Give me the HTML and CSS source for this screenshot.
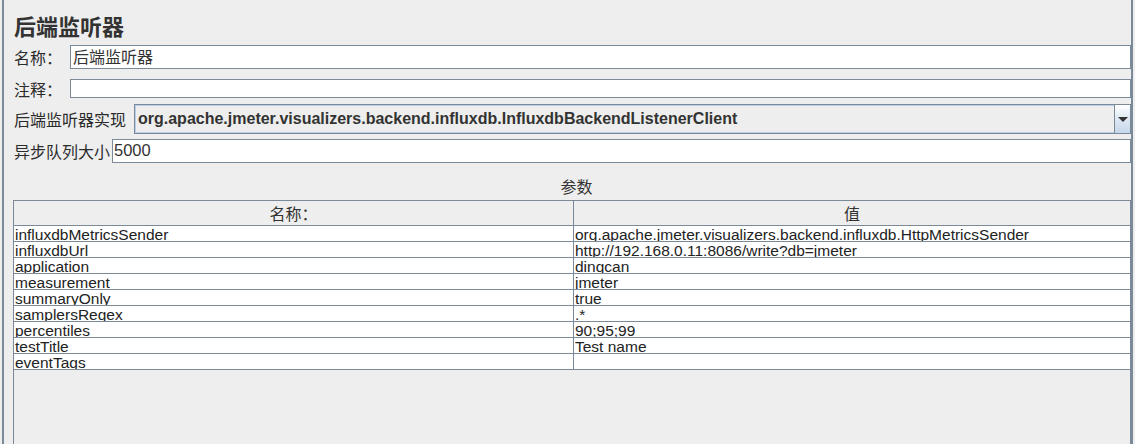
FILE: index.html
```html
<!DOCTYPE html>
<html lang="zh">
<head>
<meta charset="utf-8">
<title>后端监听器</title>
<link rel="stylesheet" href="styles.css">
</head>
<body>
<div class="frame">
  <h1 class="title">后端监听器</h1>
  <div class="row row-name">
    <span class="lbl lbl-name">名称：</span>
    <div class="field">后端监听器</div>
  </div>
  <div class="row row-comment">
    <span class="lbl lbl-name">注释：</span>
    <div class="field"></div>
  </div>
  <div class="row row-impl">
    <span class="lbl">后端监听器实现</span>
    <div class="combo">
      <div class="combo-value">org.apache.jmeter.visualizers.backend.influxdb.InfluxdbBackendListenerClient</div>
      <div class="combo-btn"><span class="arrow"></span></div>
    </div>
  </div>
  <div class="row row-queue">
    <span class="lbl">异步队列大小</span>
    <div class="field field-queue">5000</div>
  </div>
  <div class="params-title">参数</div>
  <div class="table">
    <div class="thead">
      <div class="th th-name">名称：</div>
      <div class="th">值</div>
    </div>
    <div class="tr"><div class="td td-name">influxdbMetricsSender</div><div class="td">org.apache.jmeter.visualizers.backend.influxdb.HttpMetricsSender</div></div>
    <div class="tr"><div class="td td-name">influxdbUrl</div><div class="td">http://192.168.0.11:8086/write?db=jmeter</div></div>
    <div class="tr"><div class="td td-name">application</div><div class="td">dingcan</div></div>
    <div class="tr"><div class="td td-name">measurement</div><div class="td">jmeter</div></div>
    <div class="tr"><div class="td td-name">summaryOnly</div><div class="td">true</div></div>
    <div class="tr"><div class="td td-name">samplersRegex</div><div class="td">.*</div></div>
    <div class="tr"><div class="td td-name">percentiles</div><div class="td">90;95;99</div></div>
    <div class="tr"><div class="td td-name">testTitle</div><div class="td">Test name</div></div>
    <div class="tr"><div class="td td-name">eventTags</div><div class="td"></div></div>
  </div>
</div>
</body>
</html>
```

FILE: styles.css
```css
html, body {
  margin: 0;
  padding: 0;
  height: 444px;
  overflow: hidden;
  background: #eeeeee;
}

body {
  font-family: "Liberation Sans", "Noto Sans CJK SC", sans-serif;
  color: #333333;
}

.frame {
  margin: 0 2px;
  height: 444px;
  border-left: 2px solid #7a8a99;
  border-right: 2px solid #7a8a99;
  padding-left: 10px;
  overflow: hidden;
  box-sizing: border-box;
}

.title {
  margin: 0;
  padding-top: 12px;
  height: 26px;
  line-height: 26px;
  font-family: "Noto Sans CJK SC", sans-serif;
  font-size: 22px;
  font-weight: bold;
  color: #333333;
}

.row {
  display: flex;
  align-items: center;
}

.lbl {
  font-family: "Noto Sans CJK SC", sans-serif;
  font-size: 16px;
  line-height: 20px;
  white-space: nowrap;
  color: #2b2b2b;
}

.lbl-name {
  width: 56px;
}

.row-name {
  margin-top: 7px;
  height: 24px;
}

.row-comment {
  margin-top: 10px;
  height: 19px;
}

.row-impl {
  margin-top: 6px;
  height: 30px;
}

.row-queue {
  margin-top: 5px;
  height: 24px;
}

.field {
  flex: 1;
  height: 100%;
  box-sizing: border-box;
  border: 1px solid #7a8a99;
  background: #ffffff;
  font-family: "Noto Sans CJK SC", sans-serif;
  font-size: 16px;
  line-height: 21px;
  padding-left: 2px;
  color: #333333;
  white-space: nowrap;
  overflow: hidden;
}

.field-queue {
  font-family: "Liberation Sans", sans-serif;
  font-size: 16.5px;
  padding-left: 1px;
}

.row-impl .lbl {
  width: 120px;
}

.row-queue .lbl {
  width: 98px;
}

.combo {
  flex: 1;
  height: 100%;
  display: flex;
  box-sizing: border-box;
  border: 1px solid #7a8a99;
  background: #eeeeee;
}

.combo-value {
  flex: 1;
  border: 1px solid #b8cfe5;
  border-right: none;
  font-family: "Liberation Sans", sans-serif;
  font-weight: bold;
  font-size: 16px;
  line-height: 26px;
  padding-left: 2px;
  color: #333333;
  white-space: nowrap;
  overflow: hidden;
}

.combo-btn {
  width: 15px;
  border-left: 1px solid #7a8a99;
  background: linear-gradient(#ffffff, #dde8f3 50%, #c6d7ea);
  display: flex;
  align-items: center;
  justify-content: center;
}

.arrow {
  width: 0;
  height: 0;
  border-left: 5px solid transparent;
  border-right: 5px solid transparent;
  border-top: 5px solid #333333;
}

.params-title {
  height: 37px;
  line-height: 22px;
  padding-top: 12px;
  box-sizing: border-box;
  text-align: center;
  padding-left: 8px;
  font-family: "Noto Sans CJK SC", sans-serif;
  font-size: 16px;
  color: #333333;
}

.table {
  margin-left: -1px;
  height: 300px;
  border: 1px solid #7a8a99;
  border-bottom: none;
}

.thead {
  display: grid;
  grid-template-columns: 560px 1fr;
  height: 25px;
  border-bottom: 1px solid #7a8a99;
  box-sizing: border-box;
  background: #eeeeee;
}

.th {
  text-align: center;
  font-family: "Noto Sans CJK SC", sans-serif;
  font-size: 16px;
  line-height: 24px;
  color: #333333;
}

.th-name {
  border-right: 1px solid #7a8a99;
}

.tr {
  display: grid;
  grid-template-columns: 560px 1fr;
  height: 16px;
  border-bottom: 1px solid #7a8a99;
  box-sizing: border-box;
  background: #ffffff;
}

.td {
  height: 15px;
  overflow: hidden;
  white-space: nowrap;
  font-family: "Liberation Sans", sans-serif;
  font-size: 15.5px;
  line-height: 17px;
  padding-left: 1px;
  color: #222222;
}

.td-name {
  border-right: 1px solid #7a8a99;
}
```
